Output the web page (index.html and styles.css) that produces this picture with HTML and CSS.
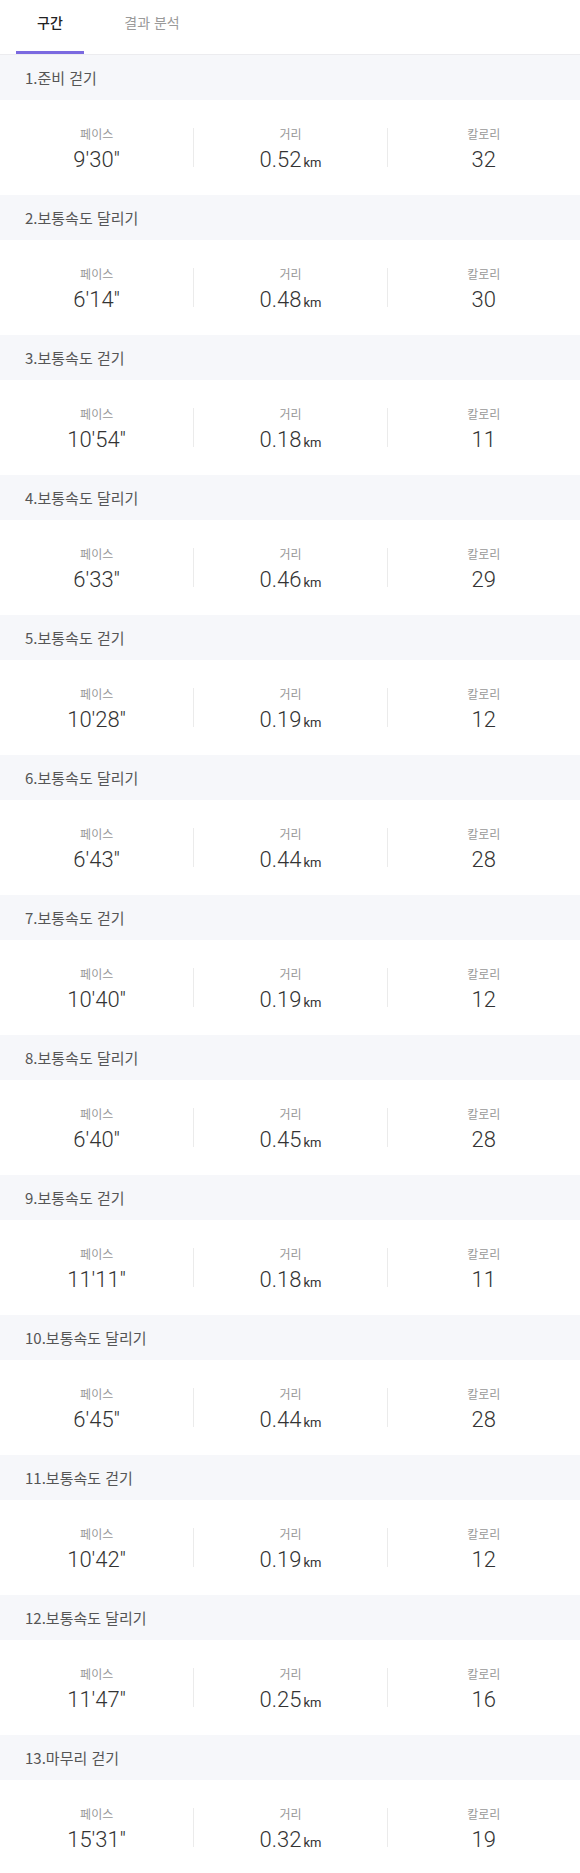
FILE: index.html
```html
<!DOCTYPE html>
<html lang="ko">
<head>
  <meta charset="UTF-8">
  <meta name="viewport" content="width=device-width, initial-scale=1">
  <title>구간</title>
  <link rel="stylesheet" href="styles.css">
</head>
<body>
  <div class="tabs">
    <div class="tab active">구간</div>
    <div class="tab">결과 분석</div>
  </div>

  <div class="section">
    <div class="section-title">1.준비 걷기</div>
    <div class="stats">
      <div class="stat"><div class="label">페이스</div><div class="value">9'30''</div></div>
      <div class="stat"><div class="label">거리</div><div class="value">0.52<span class="unit">km</span></div></div>
      <div class="stat"><div class="label">칼로리</div><div class="value">32</div></div>
    </div>
  </div>

  <div class="section">
    <div class="section-title">2.보통속도 달리기</div>
    <div class="stats">
      <div class="stat"><div class="label">페이스</div><div class="value">6'14''</div></div>
      <div class="stat"><div class="label">거리</div><div class="value">0.48<span class="unit">km</span></div></div>
      <div class="stat"><div class="label">칼로리</div><div class="value">30</div></div>
    </div>
  </div>

  <div class="section">
    <div class="section-title">3.보통속도 걷기</div>
    <div class="stats">
      <div class="stat"><div class="label">페이스</div><div class="value">10'54''</div></div>
      <div class="stat"><div class="label">거리</div><div class="value">0.18<span class="unit">km</span></div></div>
      <div class="stat"><div class="label">칼로리</div><div class="value">11</div></div>
    </div>
  </div>

  <div class="section">
    <div class="section-title">4.보통속도 달리기</div>
    <div class="stats">
      <div class="stat"><div class="label">페이스</div><div class="value">6'33''</div></div>
      <div class="stat"><div class="label">거리</div><div class="value">0.46<span class="unit">km</span></div></div>
      <div class="stat"><div class="label">칼로리</div><div class="value">29</div></div>
    </div>
  </div>

  <div class="section">
    <div class="section-title">5.보통속도 걷기</div>
    <div class="stats">
      <div class="stat"><div class="label">페이스</div><div class="value">10'28''</div></div>
      <div class="stat"><div class="label">거리</div><div class="value">0.19<span class="unit">km</span></div></div>
      <div class="stat"><div class="label">칼로리</div><div class="value">12</div></div>
    </div>
  </div>

  <div class="section">
    <div class="section-title">6.보통속도 달리기</div>
    <div class="stats">
      <div class="stat"><div class="label">페이스</div><div class="value">6'43''</div></div>
      <div class="stat"><div class="label">거리</div><div class="value">0.44<span class="unit">km</span></div></div>
      <div class="stat"><div class="label">칼로리</div><div class="value">28</div></div>
    </div>
  </div>

  <div class="section">
    <div class="section-title">7.보통속도 걷기</div>
    <div class="stats">
      <div class="stat"><div class="label">페이스</div><div class="value">10'40''</div></div>
      <div class="stat"><div class="label">거리</div><div class="value">0.19<span class="unit">km</span></div></div>
      <div class="stat"><div class="label">칼로리</div><div class="value">12</div></div>
    </div>
  </div>

  <div class="section">
    <div class="section-title">8.보통속도 달리기</div>
    <div class="stats">
      <div class="stat"><div class="label">페이스</div><div class="value">6'40''</div></div>
      <div class="stat"><div class="label">거리</div><div class="value">0.45<span class="unit">km</span></div></div>
      <div class="stat"><div class="label">칼로리</div><div class="value">28</div></div>
    </div>
  </div>

  <div class="section">
    <div class="section-title">9.보통속도 걷기</div>
    <div class="stats">
      <div class="stat"><div class="label">페이스</div><div class="value">11'11''</div></div>
      <div class="stat"><div class="label">거리</div><div class="value">0.18<span class="unit">km</span></div></div>
      <div class="stat"><div class="label">칼로리</div><div class="value">11</div></div>
    </div>
  </div>

  <div class="section">
    <div class="section-title">10.보통속도 달리기</div>
    <div class="stats">
      <div class="stat"><div class="label">페이스</div><div class="value">6'45''</div></div>
      <div class="stat"><div class="label">거리</div><div class="value">0.44<span class="unit">km</span></div></div>
      <div class="stat"><div class="label">칼로리</div><div class="value">28</div></div>
    </div>
  </div>

  <div class="section">
    <div class="section-title">11.보통속도 걷기</div>
    <div class="stats">
      <div class="stat"><div class="label">페이스</div><div class="value">10'42''</div></div>
      <div class="stat"><div class="label">거리</div><div class="value">0.19<span class="unit">km</span></div></div>
      <div class="stat"><div class="label">칼로리</div><div class="value">12</div></div>
    </div>
  </div>

  <div class="section">
    <div class="section-title">12.보통속도 달리기</div>
    <div class="stats">
      <div class="stat"><div class="label">페이스</div><div class="value">11'47''</div></div>
      <div class="stat"><div class="label">거리</div><div class="value">0.25<span class="unit">km</span></div></div>
      <div class="stat"><div class="label">칼로리</div><div class="value">16</div></div>
    </div>
  </div>

  <div class="section">
    <div class="section-title">13.마무리 걷기</div>
    <div class="stats">
      <div class="stat"><div class="label">페이스</div><div class="value">15'31''</div></div>
      <div class="stat"><div class="label">거리</div><div class="value">0.32<span class="unit">km</span></div></div>
      <div class="stat"><div class="label">칼로리</div><div class="value">19</div></div>
    </div>
  </div>
</body>
</html>
```

FILE: styles.css
```css
body {
  margin: 0;
  background: #fff;
  font-family: "Noto Sans CJK KR", "Noto Sans", sans-serif;
  color: #333;
}
.tabs {
  display: flex;
  padding-left: 16px;
  border-bottom: 1px solid #ececef;
}
.tab {
  width: 68px;
  height: 51px;
  margin-right: 34px;
  padding-top: 12px;
  box-sizing: border-box;
  text-align: center;
  font-size: 14px;
  line-height: 20px;
  color: #9a9a9a;
  border-bottom: 3px solid transparent;
  height: 54px;
}
.tab.active {
  color: #222;
  font-weight: 500;
  border-bottom-color: #7b6ae0;
}
.section-title {
  height: 45px;
  line-height: 45px;
  padding-left: 25px;
  background: #f6f7fa;
  font-size: 15px;
  color: #555;
}
.stats {
  display: grid;
  grid-template-columns: repeat(3, 1fr);
  height: 95px;
  padding-top: 28px;
  box-sizing: border-box;
}
.stat {
  height: 39px;
  text-align: center;
}
.stat + .stat {
  border-left: 1px solid #ebebeb;
}
.label {
  font-size: 12px;
  line-height: 12px;
  color: #999;
}
.value {
  margin-top: 7px;
  font-family: Roboto, "Noto Sans", sans-serif;
  font-weight: 300;
  font-size: 22px;
  line-height: 26px;
  color: #333;
}
.unit {
  font-size: 13px;
  margin-left: 2px;
  font-weight: 400;
}
```
